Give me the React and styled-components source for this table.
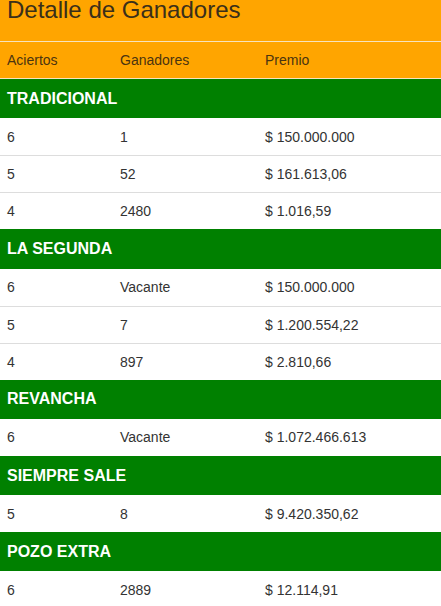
import styled, { createGlobalStyle } from "styled-components";

const GlobalStyle = createGlobalStyle`
  body {
    margin: 0;
    background: #fff;
    font-family: "Liberation Sans", Arial, sans-serif;
    color: #333;
  }
`;

const Panel = styled.div`
  width: 441px;
  overflow: hidden;
`;

const TitleBar = styled.div`
  height: 41px;
  background: #ffa500;
  border-bottom: 1px solid #f7e3bd;
  padding-left: 7px;
  overflow: hidden;
`;

const Title = styled.h3`
  margin: 0;
  margin-top: -3px;
  font-size: 24px;
  font-weight: 400;
  line-height: 26px;
  color: #3a2f1a;
`;

const Row = styled.div`
  display: grid;
  grid-template-columns: 113px 145px 1fr;
  align-items: center;
  height: 37px;
  box-sizing: border-box;
  background: ${({ $head }) => ($head ? "#ffa500" : "#fff")};
  border-top: ${({ $first }) => ($first ? "none" : "1px solid #ddd")};
  border-bottom: ${({ $head }) => ($head ? "1px solid #f7e3bd" : "none")};
  font-size: 14px;
  color: ${({ $head }) => ($head ? "#4a3410" : "#333")};
`;

const Cell = styled.div`
  padding-left: 7px;
  line-height: 20px;
`;

const Section = styled.div`
  height: 39.3px;
  display: flex;
  align-items: center;
  padding-left: 7px;
  background: #008000;
  color: #fff;
  font-weight: 700;
  font-size: 16px;
`;

const data = [
  {
    name: "TRADICIONAL",
    rows: [
      ["6", "1", "$ 150.000.000"],
      ["5", "52", "$ 161.613,06"],
      ["4", "2480", "$ 1.016,59"],
    ],
  },
  {
    name: "LA SEGUNDA",
    rows: [
      ["6", "Vacante", "$ 150.000.000"],
      ["5", "7", "$ 1.200.554,22"],
      ["4", "897", "$ 2.810,66"],
    ],
  },
  {
    name: "REVANCHA",
    rows: [["6", "Vacante", "$ 1.072.466.613"]],
  },
  {
    name: "SIEMPRE SALE",
    rows: [["5", "8", "$ 9.420.350,62"]],
  },
  {
    name: "POZO EXTRA",
    rows: [["6", "2889", "$ 12.114,91"]],
  },
];

export default function App() {
  return (
    <>
      <GlobalStyle />
      <Panel>
        <TitleBar>
          <Title>Detalle de Ganadores</Title>
        </TitleBar>
        <Row $head $first>
          <Cell>Aciertos</Cell>
          <Cell>Ganadores</Cell>
          <Cell>Premio</Cell>
        </Row>
        {data.map((s) => (
          <div key={s.name}>
            <Section>{s.name}</Section>
            {s.rows.map((r, i) => (
              <Row key={i} $first={i === 0}>
                <Cell>{r[0]}</Cell>
                <Cell>{r[1]}</Cell>
                <Cell>{r[2]}</Cell>
              </Row>
            ))}
          </div>
        ))}
      </Panel>
    </>
  );
}
